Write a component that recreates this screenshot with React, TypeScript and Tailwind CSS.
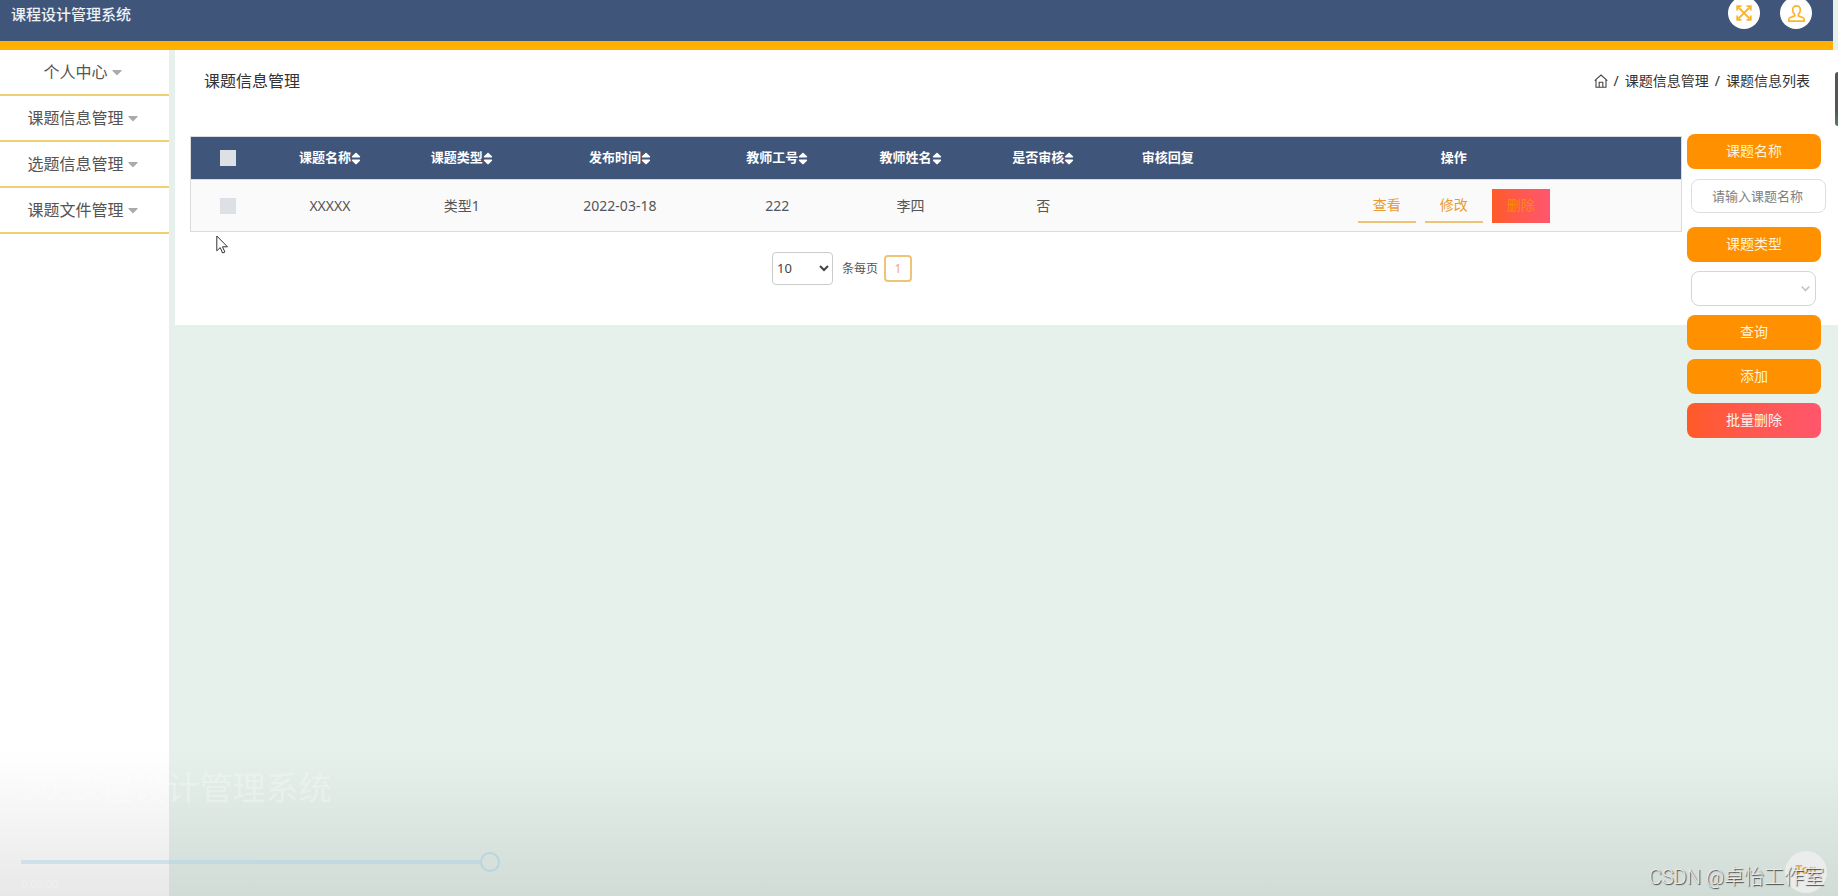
import { useState } from 'react';
import { FaCaretDown, FaSort } from 'react-icons/fa';

interface Column {
    label: string;
    width: string;
    sortable: boolean;
}

const MENU = ['个人中心', '课题信息管理', '选题信息管理', '课题文件管理'];

const COLUMNS: Column[] = [
    { label: '课题名称', width: 'w-[8.7%]', sortable: true },
    { label: '课题类型', width: 'w-[9%]', sortable: true },
    { label: '发布时间', width: 'w-[12.2%]', sortable: true },
    { label: '教师工号', width: 'w-[8.9%]', sortable: true },
    { label: '教师姓名', width: 'w-[9%]', sortable: true },
    { label: '是否审核', width: 'w-[8.8%]', sortable: true },
    { label: '审核回复', width: 'w-[7.9%]', sortable: false },
    { label: '操作', width: 'w-[30.5%]', sortable: false },
];

const ROWS = [['XXXXX', '类型1', '2022-03-18', '222', '李四', '否', '']];

const checkbox = 'block mx-auto h-4 w-4 appearance-none bg-[#dde1e6]';
const rowAction = 'h-[34px] w-[58px] border-b-2 border-[#ecc477] text-sm text-[#ea9a32]';
const orangeBlock = 'flex h-[35px] w-[134px] items-center justify-center rounded-lg bg-[#ff9000] pb-0.5 text-sm text-[#fff3d8]';

function ExpandIcon() {
    return (
        <svg className="h-4 w-4" viewBox="0 0 16 16" fill="none" stroke="#fbb52c" strokeWidth="1.8">
            <path d="M1.200 5.500V1.200H5.500M10.500 1.200h4.300V5.500M14.800 10.500v4.300H10.500M5.500 14.800H1.200V10.500" />
            <path d="M1.500 1.500l13 13M14.500 1.500l-13 13" />
        </svg>
    );
}

function UserIcon() {
    return (
        <svg className="h-[17px] w-[17px]" viewBox="0 0 16 16" fill="none" stroke="#fbb52c" strokeWidth="1.6" strokeLinejoin="round">
            <path d="M8 .8C5.600 .8 4.300 2.500 4.400 4.700c.1 1.900.8 3.300 1.900 4.200v1.300L1.700 12c-.7.400-1 1.300-1 3.200h14.600c0-1.900-.3-2.800-1-3.200L9.700 10.200V8.900c1.100-.9 1.800-2.300 1.900-4.200C11.700 2.500 10.400.8 8 .8z" />
        </svg>
    );
}

function HomeIcon() {
    return (
        <svg className="h-[14px] w-[14px]" viewBox="0 0 14 14" fill="none" stroke="#444" strokeWidth="1.1">
            <path d="M.7 6.600L7 1l6.300 5.600M2 5.600v7.600h10V5.600M5.200 13V8.200h3.600V13" />
        </svg>
    );
}

function Sidebar() {
    return (
        <nav className="w-[169px] shrink-0 bg-white">
            {MENU.map((item) => (
                <button
                    key={item}
                    type="button"
                    className="flex h-[46px] w-full items-center justify-center gap-1 border-b-2 border-[#f1cf73] pr-1 text-base text-[#555]"
                >
                    {item}
                    <FaCaretDown className="h-4 w-[10px] text-[#aaa]" />
                </button>
            ))}
        </nav>
    );
}

function TopicTable() {
    const [checked, setChecked] = useState<boolean>(false);

    return (
        <table className="w-full table-fixed border-collapse border border-[#d9dbde] text-center">
            <thead>
                <tr className="h-[43px] bg-[#3f567a] text-[13px] text-white">
                    <th className="w-[5%]">
                        <input
                            type="checkbox"
                            aria-label="全选"
                            checked={checked}
                            onChange={(e) => setChecked(e.target.checked)}
                            className={checkbox}
                        />
                    </th>
                    {COLUMNS.map((col) => (
                        <th key={col.label} className={`${col.width} font-bold`}>
                            <span className="inline-flex items-center">
                                {col.label}
                                {col.sortable && <FaSort className="h-[15px] w-[10px]" />}
                            </span>
                        </th>
                    ))}
                </tr>
            </thead>
            <tbody>
                {ROWS.map((row) => (
                    <tr key={row[0]} className="h-[52px] border-t border-[#d9dbde] bg-[#fafafa] text-sm text-[#555]">
                        <td>
                            <input
                                type="checkbox"
                                aria-label={row[0]}
                                checked={checked}
                                onChange={(e) => setChecked(e.target.checked)}
                                className={checkbox}
                            />
                        </td>
                        {row.map((cell, i) => (
                            <td key={COLUMNS[i].label}>{cell}</td>
                        ))}
                        <td>
                            <div className="flex justify-center gap-[9px] pt-px">
                                <button type="button" className={rowAction}>查看</button>
                                <button type="button" className={rowAction}>修改</button>
                                <button
                                    type="button"
                                    className="h-[34px] w-[58px] bg-linear-to-r from-[#ff5a26] to-[#ff566c] pb-0.5 text-sm text-[#f98a0c]"
                                >
                                    删除
                                </button>
                            </div>
                        </td>
                    </tr>
                ))}
            </tbody>
        </table>
    );
}

function Pager() {
    return (
        <div className="mt-5 flex items-center justify-center pr-[188px] text-xs text-[#555]">
            <select
                aria-label="条每页"
                className="h-[33px] w-[61px] rounded border border-[#ccc] bg-white pb-0.5 text-[13px] text-[#444]"
            >
                <option>10</option>
                <option>20</option>
                <option>50</option>
            </select>
            <span className="ml-[9px]">条每页</span>
            <button
                type="button"
                className="ml-[6px] h-[27px] w-[28px] rounded border-2 border-[#efc476] text-[#eea96a]"
            >
                1
            </button>
        </div>
    );
}

function SearchPanel() {
    return (
        <form className="flex w-[139px] shrink-0 flex-col" onSubmit={(e) => e.preventDefault()}>
            <label htmlFor="name" className={orangeBlock}>课题名称</label>
            <input
                id="name"
                type="text"
                placeholder="请输入课题名称"
                className="mt-[10px] ml-1 h-[34px] w-[135px] rounded-lg border border-[#ddd] bg-white pl-5 text-[13px] placeholder:text-[#7d8286]"
            />
            <label htmlFor="type" className={`${orangeBlock} mt-[14px]`}>课题类型</label>
            <div className="relative mt-[9px] ml-1 w-[125px]">
                <select id="type" className="block h-[35px] w-full appearance-none rounded-lg border border-[#d5d5d5] bg-white" />
                <svg className="pointer-events-none absolute top-[14px] right-[6px] h-2 w-[9px]" viewBox="0 0 9 8" fill="none" stroke="#c4c4c4" strokeWidth="1.8">
                    <path d="M.8 1.500l3.700 4 3.700-4" />
                </svg>
            </div>
            <button type="submit" className={`${orangeBlock} mt-[9px]`}>查询</button>
            <button type="button" className={`${orangeBlock} mt-[9px]`}>添加</button>
            <button
                type="button"
                className="mt-[9px] h-[35px] w-[134px] rounded-lg bg-linear-to-r from-[#ff5a26] to-[#ff566c] pb-0.5 text-sm text-[#fff0e8]"
            >
                批量删除
            </button>
        </form>
    );
}

// 底部播放器蒙层：标题、进度条、时间
function PlayerOverlay() {
    return (
        <div className="pointer-events-none absolute inset-x-0 bottom-0 flex h-[146px] flex-col bg-linear-to-b from-black/0 to-black/9 pl-[21px]">
            <p className="mt-[14px] text-[33px] leading-[48px] text-white/30">50.课程设计管理系统</p>
            <input
                type="range"
                aria-label="播放进度"
                defaultValue={100}
                className="mt-10 h-5 w-[479px] appearance-none bg-transparent [&::-webkit-slider-runnable-track]:h-5 [&::-webkit-slider-runnable-track]:bg-[linear-gradient(#b0d3e6,#b0d3e6)] [&::-webkit-slider-runnable-track]:bg-[length:459px_4px] [&::-webkit-slider-runnable-track]:bg-[position:0_8px] [&::-webkit-slider-runnable-track]:bg-no-repeat [&::-webkit-slider-thumb]:h-5 [&::-webkit-slider-thumb]:w-5 [&::-webkit-slider-thumb]:appearance-none [&::-webkit-slider-thumb]:rounded-full [&::-webkit-slider-thumb]:border-2 [&::-webkit-slider-thumb]:border-[#9ccbe2] opacity-50"
            />
            <span className="mt-1 text-[11px] leading-4 text-white/30">0:00:00</span>
        </div>
    );
}

export default function App() {
    return (
        <div className="relative flex min-h-screen flex-col overflow-hidden bg-[#e6f1ec] font-['Noto_Sans','Noto_Sans_CJK_SC',sans-serif]">
            <header className="mr-[5px] flex h-[50px] items-start justify-between border-b-9 border-[#ffb000] bg-[#3f567a] pr-[21px] pl-[11px]">
                <h1 className="mt-[2px] text-[15px] leading-6 font-medium text-[#eef1f5]">课程设计管理系统</h1>
                <div className="-mt-[3px] flex gap-5">
                    <button type="button" aria-label="全屏" className="flex h-8 w-8 items-center justify-center rounded-full bg-white">
                        <ExpandIcon />
                    </button>
                    <button type="button" aria-label="用户" className="flex h-8 w-8 items-center justify-center rounded-full bg-white">
                        <UserIcon />
                    </button>
                </div>
            </header>

            <div className="flex flex-1 gap-[6px]">
                <Sidebar />
                <main className="h-[275px] min-w-0 flex-1 bg-white">
                    <div className="flex h-[84px] items-start justify-between pt-[19px] pr-7 pl-[29px] text-[#333]">
                        <h2 className="text-base leading-6">课题信息管理</h2>
                        <nav className="flex items-center gap-[6px] text-sm leading-6">
                            <a href="#home" aria-label="首页"><HomeIcon /></a>
                            <span>/</span>
                            <a href="#topics">课题信息管理</a>
                            <span>/</span>
                            <span>课题信息列表</span>
                        </nav>
                    </div>
                    <div className="flex items-start gap-[5px] pr-3 pl-[15px]">
                        <div className="min-w-0 flex-1 pt-[2px]">
                            <TopicTable />
                            <Pager />
                        </div>
                        <SearchPanel />
                    </div>
                </main>
            </div>

            <PlayerOverlay />

            {/* 滚动条 */}
            <div className="absolute top-[72px] right-0 h-[54px] w-[3px] rounded-l bg-linear-to-b from-[#555] from-70% to-[#4d8062]" />

            {/* 鼠标指针 */}
            <svg className="absolute top-[235px] left-[216px] h-[19px] w-[13px]" viewBox="0 0 13 19" fill="#fff" stroke="#333" strokeWidth="1">
                <path d="M.8 1v14.800l3.400-3.200 2.400 5.400 2.300-1-2.400-5.200h5z" />
            </svg>

            {/* 返回顶部 + 水印 */}
            <button
                type="button"
                className="absolute right-[11px] bottom-[3px] h-[42px] w-[42px] rounded-full bg-[#ebecec] pb-1 text-xs font-bold text-[#e3ab4c]"
            >
                Top
            </button>
            <p className="absolute right-[14px] bottom-[5px] font-['Roboto','Noto_Sans_CJK_SC',sans-serif] text-[20px] leading-7 font-light text-[#e8ebea] [text-shadow:1px_1px_1px_#444]">
                CSDN @卓怡工作室
            </p>
        </div>
    );
}
